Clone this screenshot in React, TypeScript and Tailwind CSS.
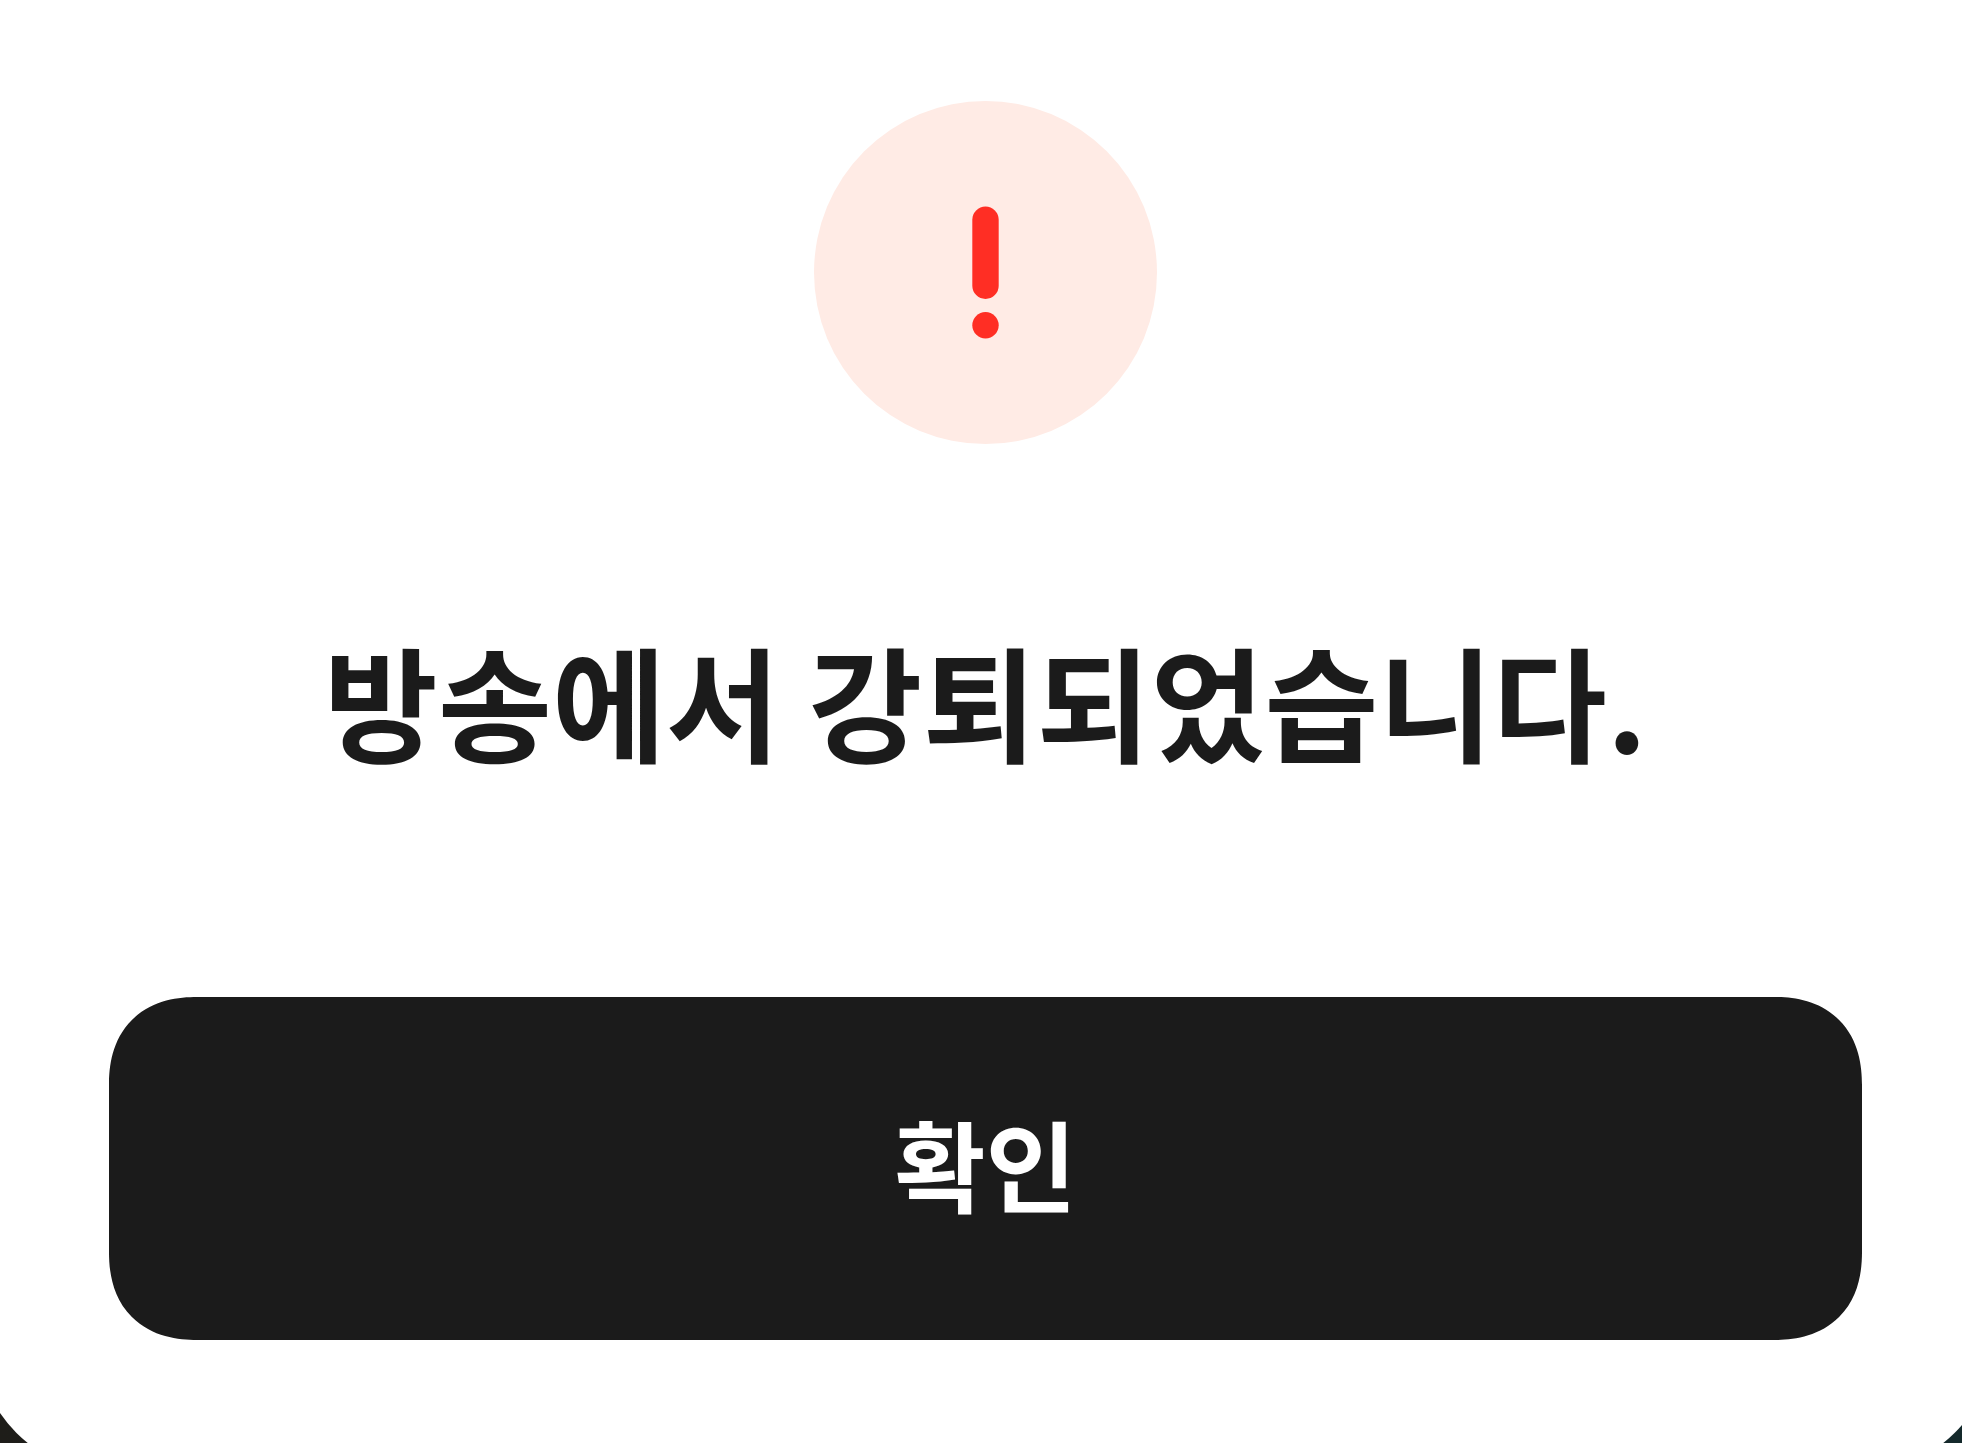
import React from 'react';

const AlertIcon: React.FC = () => (
  <svg viewBox="0 0 52 52" className="size-[343px]" aria-hidden="true">
    <circle cx="26" cy="26" r="26" fill="#ffebe5" />
    <rect x="24" y="16" width="4" height="14" rx="2" fill="#ff2e24" />
    <circle cx="26" cy="34" r="2" fill="#ff2e24" />
  </svg>
);

interface AlertDialogProps {
  message: string;
  confirmLabel: string;
  onConfirm?: () => void;
}

const AlertDialog: React.FC<AlertDialogProps> = ({ message, confirmLabel, onConfirm }) => (
  <div
    role="alertdialog"
    aria-labelledby="alert-message"
    className="-mr-8 -ml-[23px] flex flex-col items-center rounded-b-[134px] bg-white px-[132px] pt-[101px] pb-[132px]"
  >
    <AlertIcon />
    <h1 id="alert-message" className="mt-[161px] text-[124px] leading-[188px] font-bold whitespace-nowrap text-[#1b1b1b]">
      {message}
    </h1>
    <button
      type="button"
      onClick={onConfirm}
      className="mt-[204px] h-[343px] w-full rounded-[79px] bg-[#1b1b1b] pb-3 text-[99px] font-bold text-white supports-[corner-shape:squircle]:rounded-[88px] supports-[corner-shape:squircle]:[corner-shape:superellipse(1.2)]"
    >
      {confirmLabel}
    </button>
  </div>
);

const App: React.FC = () => (
  <main className="h-screen overflow-hidden bg-linear-to-r from-[#1e1d19] to-[#14292b] font-['Noto_Sans_CJK_KR',sans-serif]">
    <AlertDialog message="방송에서 강퇴되었습니다." confirmLabel="확인" />
  </main>
);

export default App;
